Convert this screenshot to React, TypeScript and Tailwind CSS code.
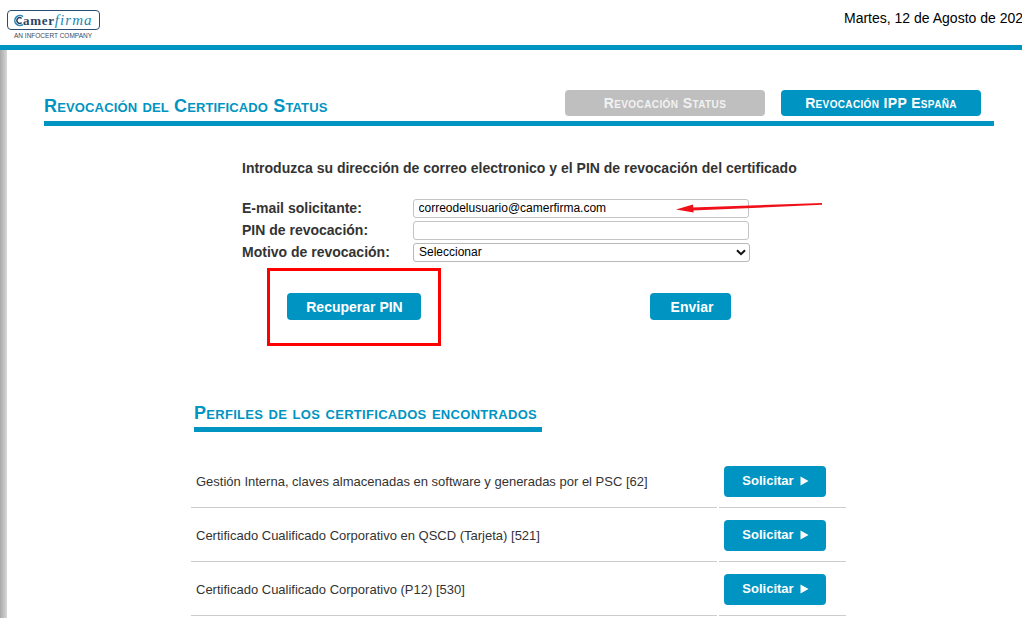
const font = { fontFamily: '"Liberation Sans", Arial, sans-serif' };

const perfiles = [
  "Gestión Interna, claves almacenadas en software y generadas por el PSC [62]",
  "Certificado Cualificado Corporativo en QSCD (Tarjeta) [521]",
  "Certificado Cualificado Corporativo (P12) [530]",
];

const Logo = () => (
  <div className="ml-[7px] mt-[10px] w-[93px]">
    <div className="flex h-[20px] w-[93px] items-center rounded-[4px] border-[1.5px] border-[#2a4c72] pl-[5px] leading-none">
      <svg width="12" height="13" viewBox="0 0 12 13" className="mr-[-2px] shrink-0">
        <path d="M10 2.6A5 5 0 1 0 10 10.4" fill="none" stroke="#2f86b5" strokeWidth="1.6" />
        <path d="M8.6 4.4A2.8 2.8 0 1 0 8.6 8.6" fill="none" stroke="#24405f" strokeWidth="1.4" />
      </svg>
      <span className="text-[13px] font-bold tracking-[0.7px] text-[#2b4463]" style={{ fontFamily: '"Liberation Serif", serif' }}>amer</span>
      <span className="text-[15px] italic tracking-[1.1px] text-[#1d86b5]" style={{ fontFamily: '"Liberation Serif", serif' }}>firma</span>
    </div>
    <div className="mt-[3px] pl-[7px] text-[6.5px] leading-[6px] whitespace-nowrap text-[#3b4a5a]">AN INFOCERT COMPANY</div>
  </div>
);

const Row = ({ label, children }: { label: string; children: React.ReactNode }) => (
  <div className="flex h-[22px] items-center">
    <label className="w-[171px] text-[14px] font-bold text-[#333]">{label}</label>
    {children}
  </div>
);

export default function App() {
  return (
    <div className="relative h-[618px] w-[1022px] overflow-hidden bg-white" style={font}>
      <header className="flex h-[45px] justify-between">
        <Logo />
        <div className="w-[178px] pt-[10px] text-[14px] leading-[16px] whitespace-nowrap text-black">Martes, 12 de Agosto de 2025</div>
      </header>
      <div className="h-[5px] bg-[#0094c2]" />

      <div className="flex">
        <div className="h-[568px] w-[7px] shrink-0 bg-gradient-to-r from-[#a9a9a9] to-[#d8d8d8]" />
        <main className="ml-[37px] w-[950px]">
          <div className="mt-[40px] flex h-[36px] items-start justify-between border-b-[5px] border-[#0094c2] pr-[13px]">
            <h1 className="mt-[7px] text-[18px] leading-[18px] font-bold text-[#0094c2] [font-variant:small-caps] tracking-[0.15px]">Revocación del Certificado Status</h1>
            <div className="flex gap-[16px]">
              <button className="h-[26px] w-[200px] rounded-[4px] bg-[#bfbfbf] pt-[1px] text-[14px] font-bold text-[#f2f2f2] [font-variant:small-caps] tracking-[0.4px]">Revocación Status</button>
              <button className="h-[26px] w-[200px] rounded-[4px] bg-[#0094c2] pt-[1px] text-[14px] font-bold text-white [font-variant:small-caps] tracking-[0.35px]">Revocación IPP España</button>
            </div>
          </div>

          <div className="ml-[198px] w-[520px]">
            <p className="mt-[33px] h-[18px] text-[14px] leading-[18px] font-bold whitespace-nowrap text-[#333]">Introduzca su dirección de correo electronico y el PIN de revocación del certificado</p>
            <div className="mt-[20px]">
              <Row label="E-mail solicitante:">
                <input readOnly value="correodelusuario@camerfirma.com" className="h-[19px] w-[336px] rounded-[3px] border border-[#c4c4c4] px-[4.5px] text-[12px] text-black" />
              </Row>
              <Row label="PIN de revocación:">
                <input readOnly value="" className="h-[19px] w-[336px] rounded-[3px] border border-[#c4c4c4] px-[4px] text-[12px] text-black" />
              </Row>
              <Row label="Motivo de revocación:">
                <div className="flex h-[19px] w-[337px] items-center justify-between rounded-[3px] border border-[#b8b8b8] pr-[3px] pl-[5px] text-[12px] text-black">
                  <span>Seleccionar</span>
                  <svg width="10" height="7" viewBox="0 0 10 7"><path d="M1 1.2 5 5.2 9 1.2" fill="none" stroke="#111" strokeWidth="2" /></svg>
                </div>
              </Row>
            </div>
          </div>

          <div className="mt-[30px] ml-[243px] flex h-[27px] w-[444px] justify-between">
            <button className="h-[27px] w-[134px] rounded-[4px] bg-[#0094c2] pt-[1px] pl-[1px] text-[14px] font-bold text-white">Recuperar PIN</button>
            <button className="h-[27px] w-[81px] rounded-[4px] bg-[#0094c2] pt-[1px] pl-[3px] text-[14px] font-bold text-white">Enviar</button>
          </div>

          <section className="mt-[73px] ml-[147px] w-[655px]">
            <div className="ml-[3px] h-[39px] w-[348px] border-b-[5px] border-[#0094c2]">
              <h2 className="pt-[8px] text-[18px] leading-[24px] font-bold whitespace-nowrap text-[#0094c2] [font-variant:small-caps] tracking-[0.3px]">Perfiles de los certificados encontrados</h2>
            </div>
            <div className="mt-[22px]">
              {perfiles.map((p) => (
                <div key={p} className="flex h-[54px] gap-[2px]">
                  <div className="flex w-[526px] items-center border-b border-[#cccccc] pt-[2px] pl-[5px] text-[13px] leading-[16px] text-[#333]">{p}</div>
                  <div className="flex w-[127px] items-center border-b border-[#cccccc] pt-[2px] pl-[5px]">
                    <button className="flex h-[31px] w-[102px] items-center justify-center gap-[6px] rounded-[4px] bg-[#0094c2] pb-[2px] pl-[1px] text-[13px] font-bold text-white">
                      Solicitar
                      <svg width="9" height="10" viewBox="0 0 9 10"><path d="M0.5 0.5 8.5 5 0.5 9.5Z" fill="#fff" /></svg>
                    </button>
                  </div>
                </div>
              ))}
            </div>
          </section>
        </main>
      </div>

      {/* anotaciones rojas sobre la captura */}
      <div className="absolute top-[268px] left-[267px] h-[78px] w-[174px] border-[3px] border-[#ff0000]" />
      <svg className="absolute top-[198px] left-[670px]" width="156" height="16" viewBox="0 0 156 16">
        <path d="M152 5 152 6.8 22 12.6 22 9.4Z" fill="#f0101a" />
        <path d="M6 11.4 23 6.6 23.6 14.6Z" fill="#f0101a" />
      </svg>
    </div>
  );
}
